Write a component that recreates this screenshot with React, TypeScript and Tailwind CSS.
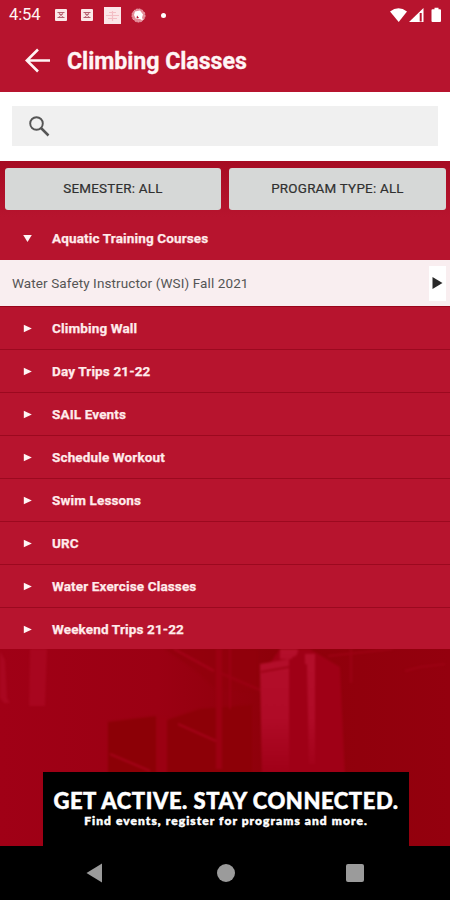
const categories = [
  "Climbing Wall",
  "Day Trips 21-22",
  "SAIL Events",
  "Schedule Workout",
  "Swim Lessons",
  "URC",
  "Water Exercise Classes",
  "Weekend Trips 21-22",
];

function NoticeIcon() {
  return (
    <svg width="12" height="12" viewBox="0 0 12 12">
      <rect width="12" height="12" rx="1" fill="#fbe9e9" />
      <path d="M2.500 3.500h7M2.500 8.500h7M4 4.500l4 3M8 4.500l-4 3" stroke="#b5606f" strokeWidth="1.200" fill="none" />
    </svg>
  );
}

function StatusBar() {
  return (
    <div className="flex h-[30px] shrink-0 items-center pl-[9px] pr-[8px] text-[#fff3f3]">
      <span className="w-[46px] text-[16.5px] leading-none tracking-[-0.1px]">4:54</span>
      <div className="flex flex-1 items-center">
        <NoticeIcon />
        <div className="ml-[14px]">
          <NoticeIcon />
        </div>
        <svg className="ml-[11px]" width="17" height="17" viewBox="0 0 17 17">
          <rect width="17" height="17" fill="#fbe6e8" />
          <path d="M2 8.500h13M5 5.500h7M4 11.500h9M8.500 4v10" stroke="#f3bec5" strokeWidth="1.200" />
        </svg>
        <svg className="ml-[10px]" width="15" height="15" viewBox="0 0 15 15">
          <circle cx="7.500" cy="7.500" r="6.500" fill="#e58c98" stroke="#f0b4bc" strokeDasharray="2 1" />
          <path d="M4 3.500l5-1 3 4-1 3 1 3-3-1.500-4 0L3 7z" fill="#fff" />
          <path d="M6 7.500l2 2.500-2.500.500z" fill="#b7142e" />
        </svg>
        <div className="ml-[15px] size-[5px] rounded-full bg-white" />
      </div>
      <svg width="52" height="17" viewBox="0 0 52 17">
        <path d="M0 4.500Q8.500-2 17 4.500L8.700 15z" fill="#fff" />
        <path d="M33.500 1v14H19z" fill="#fff" />
        <path d="M29.700 6h2v8.500h-2z" fill="#b7142e" />
        <path d="M42.500 2.200h2V.8h4v1.400h1.500q1 0 1 1V14q0 1-1 1h-7.500q-1 0-1-1V3.200q0-1 1-1z" fill="#fff" />
      </svg>
    </div>
  );
}

function TitleBar() {
  return (
    <div className="flex h-[62px] shrink-0 items-center pl-[25px]">
      <svg width="26" height="26" viewBox="0 0 26 26" fill="none" stroke="#fff5f5" strokeWidth="2.600">
        <path d="M25 12.500H2M13 1.500L1.800 12.500 13 23.500" />
      </svg>
      <h1 className="mt-[2px] ml-[16px] text-[23.200px] leading-none font-bold tracking-[-0.060px] text-[#fff5f5] [-webkit-text-stroke:0.300px]">
        Climbing Classes
      </h1>
    </div>
  );
}

function SearchBar() {
  return (
    <div className="h-[69px] shrink-0 bg-white px-[12px] pt-[14px]">
      <div className="flex h-[40px] items-center bg-[#f0f0f0] pl-[17px]">
        <svg width="21" height="21" viewBox="0 0 21 21" fill="none" stroke="#555">
          <circle cx="7.500" cy="7.500" r="6.300" strokeWidth="1.900" />
          <path d="M12 12l7.500 7.500" strokeWidth="2.500" />
        </svg>
      </div>
    </div>
  );
}

function Marker({ open = false }: { open?: boolean }) {
  return (
    <svg className="ml-[23px] shrink-0" width="9" height="9" viewBox="0 0 9 9" fill="#fff5f5">
      {open ? <path d="M.200 1h8.600L4.500 8z" /> : <path d="M.800.700L8.800 4.500.800 8.300z" />}
    </svg>
  );
}

function CategoryName({ name }: { name: string }) {
  return (
    <span className="ml-[20px] text-[13.500px] font-bold tracking-[0.140px] text-[#ffebeb] [-webkit-text-stroke:0.250px]">
      {name}
    </span>
  );
}

function CategoryRow({ name }: { name: string }) {
  return (
    <div className="flex h-[43px] items-center border-b border-[#9c091f] last:h-[42px] last:border-0">
      <Marker />
      <CategoryName name={name} />
    </div>
  );
}

// Red tinted gym photo behind the list
function Backdrop() {
  return (
    <svg className="block" width="450" height="197" viewBox="0 0 450 197">
      <defs>
        <linearGradient id="base">
          <stop offset="0" stopColor="#a00016" />
          <stop offset=".350" stopColor="#9b0013" />
          <stop offset=".600" stopColor="#8e000a" />
          <stop offset="1" stopColor="#94000e" />
        </linearGradient>
        <linearGradient id="pillar" gradientUnits="userSpaceOnUse" x1="0" y1="0" x2="0" y2="125">
          <stop offset="0" stopColor="#b40f2b" />
          <stop offset=".550" stopColor="#b00b27" />
          <stop offset="1" stopColor="#a00017" />
        </linearGradient>
        <filter id="soft" colorInterpolationFilters="sRGB">
          <feGaussianBlur stdDeviation="1" />
        </filter>
      </defs>
      <rect width="450" height="197" fill="url(#base)" />
      <g filter="url(#soft)">
        <path d="M0 2l5 9 2 38 3 5H4l-4-5z" fill="#ad0a25" opacity=".700" />
        <path d="M30 0h17l-2 57H29z" fill="#ad0923" opacity=".700" />
        <path d="M108 73l48-6v60h-48z" fill="#8c0006" />
        <path d="M167 71l33-11 52-4v75h-85z" fill="#8d0007" />
        <path d="M165 0h93v42l-42-2-18-17z" fill="#92000b" opacity=".700" />
        <path d="M174 0l40 22M178 75l38 17M110 105l40 17" stroke="#a40319" strokeWidth="2" fill="none" />
        <path d="M216 0h6v120h-6zM157 68h10v60h-10z" fill="#9b0012" />
        <path d="M218 23l42 18M230 0v60" stroke="#9c0014" strokeWidth="2" fill="none" />
        <path d="M280 0h30l30 18 5 110h-83V25z" fill="#9f0016" />
        <path d="M260 15l29-5v130h-27z" fill="url(#pillar)" />
        <path d="M261 23l28-5" stroke="#9a0012" strokeWidth="1.500" />
        <path d="M280 0h18q0 8-6 8v2h-12zM305 5h10v10h-10zM307 15h8v100h-6z" fill="url(#pillar)" />
        <path d="M328 7l65-7M351 0v34M405 22l15-4 25-3" stroke="#9c0214" strokeWidth="2" fill="none" />
      </g>
    </svg>
  );
}

function Banner() {
  return (
    <div className="h-[74px] w-[366px] bg-black pt-[18px] text-center font-['Lato',sans-serif] text-white">
      <p className="text-[22px] leading-[22px] font-black tracking-[0.550px] whitespace-nowrap [-webkit-text-stroke:0.500px]">
        GET ACTIVE. STAY CONNECTED.
      </p>
      <p className="text-[12px] leading-[18px] font-black tracking-[1.080px] whitespace-nowrap [-webkit-text-stroke:0.500px]">
        Find events, register for programs and more.
      </p>
    </div>
  );
}

export default function App() {
  return (
    <div className="flex h-[900px] w-[450px] flex-col overflow-hidden bg-[#b7142e] font-['Roboto',sans-serif]">
      <StatusBar />
      <TitleBar />
      <SearchBar />

      <div className="flex h-[56px] shrink-0 gap-[8px] bg-linear-to-b from-[#a60b22] to-[#b7142e] pt-[7px] pl-[5px] text-[13.400px] tracking-[0.230px] text-[#303030] [-webkit-text-stroke:0.200px]">
        <button className="h-[42px] w-[216px] rounded-[3px] bg-[#d6d8d7]">SEMESTER: ALL</button>
        <button className="h-[42px] w-[217px] rounded-[3px] bg-[#d6d8d7]">PROGRAM TYPE: ALL</button>
      </div>

      <div className="flex h-[43px] shrink-0 items-center">
        <Marker open />
        <CategoryName name="Aquatic Training Courses" />
      </div>
      <div className="flex h-[47px] shrink-0 items-center justify-between border-b border-[#99051c] bg-[#f9eef0] pr-[4px] pl-[12px]">
        <span className="text-[13.500px] tracking-[0.100px] text-[#555]">Water Safety Instructor (WSI) Fall 2021</span>
        <div className="flex h-[35px] w-[17px] items-center justify-center bg-white">
          <svg width="11" height="12" viewBox="0 0 11 12">
            <path d="M.500 0L10.500 6 .500 12z" fill="#292929" />
          </svg>
        </div>
      </div>
      <div className="shrink-0">
        {categories.map((name) => (
          <CategoryRow key={name} name={name} />
        ))}
      </div>

      <div className="relative -mt-px h-[197px] shrink-0">
        <Backdrop />
        <div className="absolute bottom-0 left-[43px]">
          <Banner />
        </div>
      </div>

      <div className="flex h-[54px] shrink-0 items-center bg-black">
        <svg className="ml-[86px]" width="17" height="20" viewBox="0 0 17 20">
          <path d="M.500 10L16 .500v19z" fill="#9b9b9b" />
        </svg>
        <div className="ml-[114px] size-[18px] rounded-full bg-[#9b9b9b]" />
        <div className="ml-[111px] size-[18px] rounded-[2px] bg-[#9b9b9b]" />
      </div>
    </div>
  );
}
